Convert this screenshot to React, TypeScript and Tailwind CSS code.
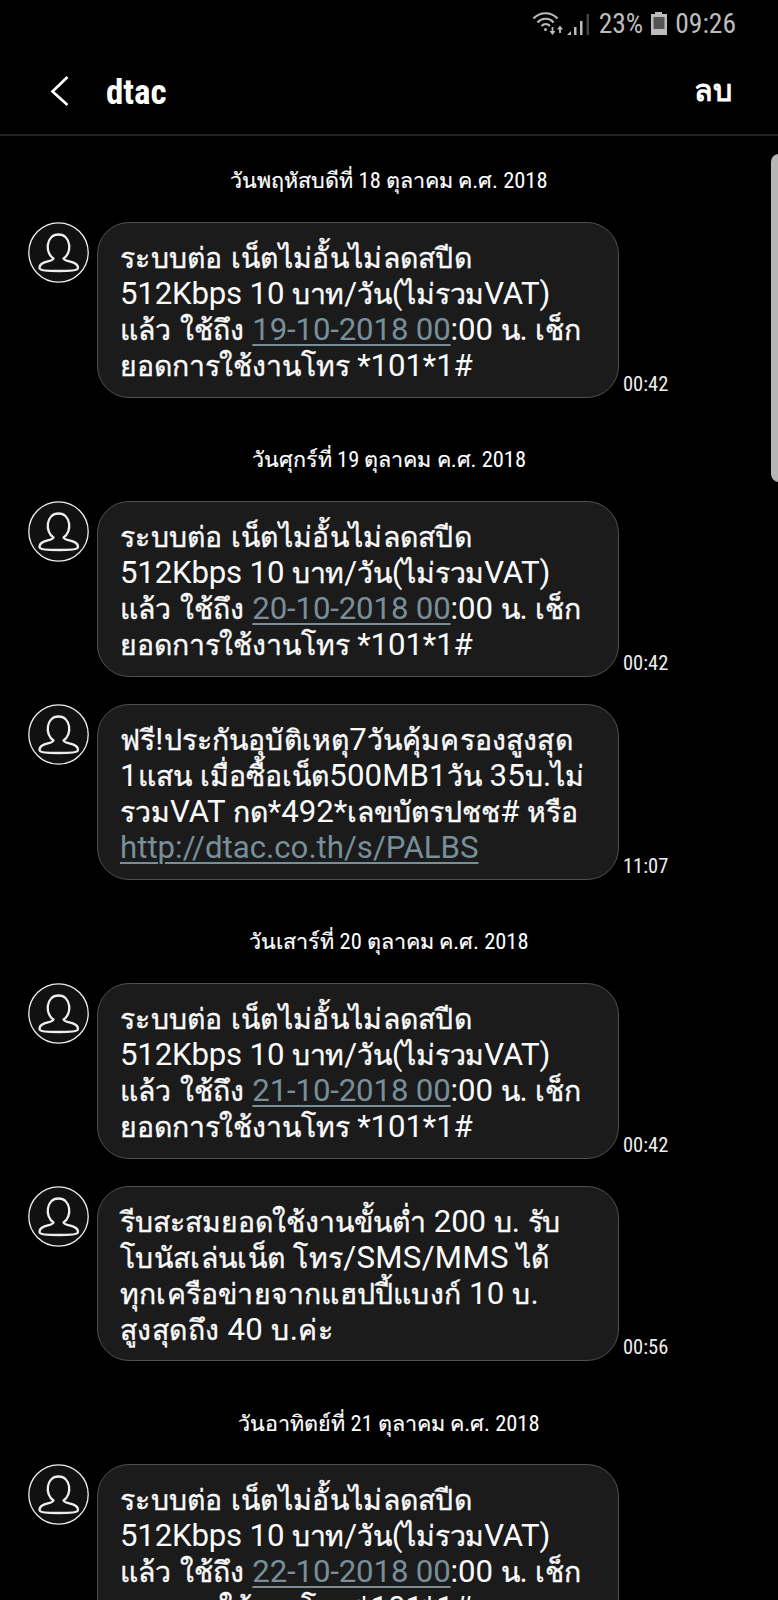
type Segment = { text: string; link?: boolean; tracking?: string };
type Message = { lines: Segment[][]; time: string };
type Day = { label: string; messages: Message[] };

const dataPack = (date: string): Message => ({
  time: "00:42",
  lines: [
    [{ text: "ระบบต่อ เน็ตไม่อั้นไม่ลดสปีด", tracking: "tracking-[0.3px]" }],
    [{ text: "512Kbps 10 บาท/วัน(ไม่รวมVAT)", tracking: "tracking-[-0.18px]" }],
    [
      { text: "แล้ว ใช้ถึง ", tracking: "tracking-[0.2px]" },
      { text: `${date} 00`, link: true, tracking: "tracking-[-0.15px]" },
      { text: ":00 น. เช็ก", tracking: "tracking-[-0.1px]" },
    ],
    [{ text: "ยอดการใช้งานโทร *101*1#", tracking: "tracking-[-0.1px]" }],
  ],
});

const days: Day[] = [
  { label: "วันพฤหัสบดีที่ 18 ตุลาคม ค.ศ. 2018", messages: [dataPack("19-10-2018")] },
  {
    label: "วันศุกร์ที่ 19 ตุลาคม ค.ศ. 2018",
    messages: [
      dataPack("20-10-2018"),
      {
        time: "11:07",
        lines: [
          [{ text: "ฟรี!ประกันอุบัติเหตุ7วันคุ้มครองสูงสุด", tracking: "tracking-[0.15px]" }],
          [{ text: "1แสน เมื่อซื้อเน็ต500MB1วัน 35บ.ไม่", tracking: "tracking-[0.08px]" }],
          [{ text: "รวมVAT กด*492*เลขบัตรปชช# หรือ" }],
          [{ text: "http://dtac.co.th/s/PALBS", link: true }],
        ],
      },
    ],
  },
  {
    label: "วันเสาร์ที่ 20 ตุลาคม ค.ศ. 2018",
    messages: [
      dataPack("21-10-2018"),
      {
        time: "00:56",
        lines: [
          [{ text: "รีบสะสมยอดใช้งานขั้นต่ำ 200 บ. รับ", tracking: "tracking-[-0.06px]" }],
          [{ text: "โบนัสเล่นเน็ต โทร/SMS/MMS ได้", tracking: "tracking-[0.32px]" }],
          [{ text: "ทุกเครือข่ายจากแฮปปี้แบงก์ 10 บ.", tracking: "tracking-[0.2px]" }],
          [{ text: "สูงสุดถึง 40 บ.ค่ะ", tracking: "tracking-[0.38px]" }],
        ],
      },
    ],
  },
  { label: "วันอาทิตย์ที่ 21 ตุลาคม ค.ศ. 2018", messages: [dataPack("22-10-2018")] },
];

// Thai glyphs run wider than Roboto, so they get their own size
function Mixed({ text, thai }: { text: string; thai: string }) {
  return (
    <>
      {text.split(/([\u0E00-\u0E7F]+)/).map((part, i) =>
        i % 2 ? (
          <span key={i} className={thai}>
            {part}
          </span>
        ) : (
          part
        ),
      )}
    </>
  );
}

function StatusBar() {
  return (
    <div className="flex h-12 shrink-0 items-center justify-end pr-[42px] text-[27.5px] text-[#bdbdbd]">
      <svg className="h-[24px] w-[31px]" viewBox="0 0 31 24" fill="none" stroke="currentColor" strokeWidth="2.2">
        <path d="M1.5 6.500C8 -0.500 19 -0.500 25.500 6.500M5.500 10.500C10 5.500 17.500 5.500 21.500 10.500M9.500 14C12 11.500 15.500 11.500 18 14" />
        <circle cx="13.500" cy="17.500" r="1.500" fill="currentColor" stroke="none" />
        <path d="M20.500 15v6M28 21v-5" strokeWidth="1.800" />
        <path d="M17.500 19h6l-3 4zM25 17.500h6l-3-4z" fill="currentColor" stroke="none" />
      </svg>
      <svg className="ml-1 h-[24px] w-[23px]" viewBox="0 0 23 24" fill="currentColor">
        <path d="M0 23l4-4v4zM7 15h2.500v8H7zM13 9h2.500v14H13z" />
        <path d="M19.500 2H22v21h-2.500z" opacity=".35" />
      </svg>
      <span className="ml-[9px] font-['Roboto_Condensed',Roboto,sans-serif] [font-stretch:75%]">23%</span>
      <svg className="ml-[8px] h-[24px] w-[16px]" viewBox="0 0 16 24">
        <path d="M4 0h7v2h5v21H0V2h4z" fill="#bdbdbd" />
        <path d="M2.500 5h11v12h-11z" fill="#555" />
      </svg>
      <span className="ml-[8px] font-['Roboto_Condensed',Roboto,sans-serif] [font-stretch:75%]">09:26</span>
    </div>
  );
}

function Avatar() {
  return (
    <svg className="h-[61px] w-[61px] shrink-0" viewBox="0 0 61 61" fill="none" stroke="#eee">
      <circle cx="30.500" cy="30.500" r="29.700" fill="#111" strokeWidth="1.300" />
      <path
        strokeWidth="2.300"
        strokeLinejoin="round"
        d="M25.500 36.500C16.500 31 18 12.500 30.500 12.500S44.500 31 35.500 36.500C36.500 40.500 50 38.500 50 46C50 48.500 42 49 30.500 49S11.500 48.500 11.500 46C11.500 38.500 24.500 40.500 25.500 36.500Z"
      />
    </svg>
  );
}

function Bubble({ message }: { message: Message }) {
  return (
    <div className="flex h-[175.9px] pl-[28px]">
      <Avatar />
      <div className="ml-2 w-[522px] shrink-0 rounded-[32px] border-[1.5px] border-[#505050] bg-[#1b1b1b] pt-[17px] pl-[22px]">
        {message.lines.map((line, i) => (
          <p key={i} className="h-9 text-[31.2px] leading-9 whitespace-pre text-[#fafafa]">
            {line.map((s, j) => (
              <span
                key={j}
                className={`${s.tracking ?? ""} ${s.link ? "text-[#788f9a] underline decoration-[1.5px] underline-offset-4" : ""}`}
              >
                <Mixed text={s.text} thai="text-[28.4px] leading-none [-webkit-text-stroke:0.35px_currentColor]" />
              </span>
            ))}
          </p>
        ))}
      </div>
      <time className="ml-1 self-end pb-[2px] text-[20.5px] leading-6 text-[#eee] font-['Roboto_Condensed',Roboto,sans-serif] [font-stretch:75%]">
        {message.time}
      </time>
    </div>
  );
}

export default function App() {
  return (
    <div className="flex h-[1600px] w-[778px] flex-col overflow-hidden bg-black font-[Roboto,sans-serif] text-white">
      <StatusBar />
      <header className="flex h-[88px] shrink-0 items-center border-b-2 border-[#222] pr-[46px] pl-[49px]">
        <svg className="h-[30px] w-[20px]" viewBox="0 0 20 30" fill="none" stroke="#fff" strokeWidth="2.700">
          <path d="M18.500 1L3.500 15.500L18.500 29" />
        </svg>
        <h1 className="ml-[37px] pt-[4px] text-[35px] leading-10 font-bold font-['Roboto_Condensed',Roboto,sans-serif] [font-stretch:75%]">
          dtac
        </h1>
        <button className="ml-auto text-[30.5px] font-bold">ลบ</button>
      </header>
      <div className="relative flex-1 overflow-hidden">
        {days.map((day) => (
          <section key={day.label}>
            <h2 className="flex h-[86px] items-center justify-center pt-[4px] text-[22.5px] font-normal font-['Roboto_Condensed',Roboto,sans-serif] [font-stretch:75%]">
              <span>
                <Mixed text={day.label} thai="text-[21.5px] [-webkit-text-stroke:0.2px_currentColor]" />
              </span>
            </h2>
            <div className="flex flex-col gap-[27px] pb-[17px]">
              {day.messages.map((message, i) => (
                <Bubble key={i} message={message} />
              ))}
            </div>
          </section>
        ))}
        <div className="absolute top-[18px] -right-1 h-[328px] w-[11.5px] rounded-l-[8px] bg-[#b5b5b5]" />
      </div>
    </div>
  );
}
